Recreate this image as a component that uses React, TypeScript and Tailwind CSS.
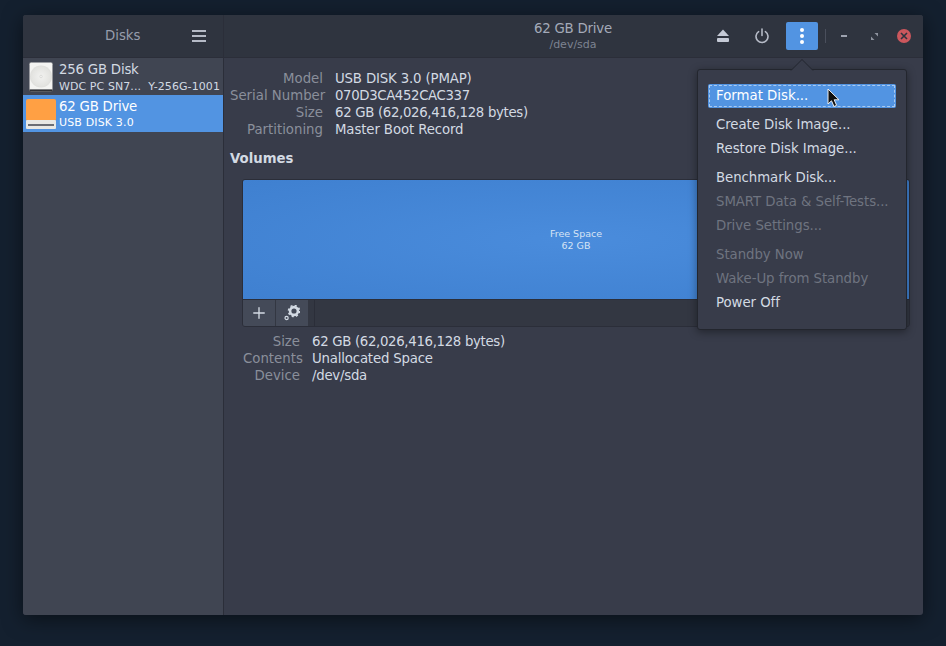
import { Plus } from 'lucide-react'

const font = { fontFamily: '"DejaVu Sans", sans-serif' }

function DiskIcon() {
  return (
    <svg width="24" height="30" viewBox="0 0 24 30" className="shrink-0">
      <defs>
        <radialGradient id="platter" cx="0.5" cy="0.5" r="0.6">
          <stop offset="0" stopColor="#f2f2f0" />
          <stop offset="0.7" stopColor="#e4e4e1" />
          <stop offset="1" stopColor="#d8d8d5" />
        </radialGradient>
      </defs>
      <rect x="0.3" y="0.3" width="23.4" height="29.4" rx="2" fill="#f4f4f2" stroke="#6b6e75" strokeWidth="0.6" />
      <rect x="0.5" y="27.4" width="23" height="2.2" fill="#2f3136" />
      <circle cx="12" cy="14.5" r="11" fill="url(#platter)" />
      <circle cx="12" cy="14.5" r="1.3" fill="#f2f2f0" stroke="#cbcbc8" strokeWidth="0.5" />
    </svg>
  )
}

function UsbIcon() {
  return (
    <svg width="30" height="30" viewBox="0 0 30 30" className="shrink-0">
      <rect x="0" y="0" width="30" height="22" rx="2" fill="#ffa044" />
      <rect x="0" y="21" width="30" height="9" rx="1" fill="#e8e8e4" />
      <rect x="2" y="25" width="26" height="2" fill="#6b6e75" />
    </svg>
  )
}

function Eject() {
  return (
    <svg width="14" height="14" viewBox="0 0 14 14">
      <path d="M7 .5 13 7H1Z" fill="#c5cad6" />
      <rect x="1" y="9" width="12" height="4" rx="1" fill="#c5cad6" />
    </svg>
  )
}

function Power() {
  return (
    <svg width="16" height="16" viewBox="0 0 16 16" fill="none" stroke="#b5bac6" strokeWidth="1.6" strokeLinecap="round">
      <path d="M4.6 3.6a6 6 0 1 0 6.8 0" />
      <path d="M8 1v6.5" />
    </svg>
  )
}

function Gears() {
  return (
    <svg width="16" height="16" viewBox="0 0 16 16" fill="none">
      <circle cx="10" cy="6" r="3.9" stroke="#d3dae3" strokeWidth="2.6" />
      <circle cx="10" cy="6" r="5.5" stroke="#d3dae3" strokeWidth="1.6" strokeDasharray="2.1 2.22" />
      <circle cx="2.6" cy="13" r="1.6" stroke="#d3dae3" strokeWidth="1.2" />
    </svg>
  )
}

function Row({ label, value, w, fix = '' }: { label: string; value: string; w: string; fix?: string }) {
  return (
    <div className="flex h-[17px] items-center whitespace-nowrap">
      <span className={`${w} shrink-0 text-right text-[#8a8f9b]`}>{label}</span>
      <span className={`ml-3 text-[#d3dae3] ${fix}`}>{value}</span>
    </div>
  )
}

function MenuItem({ label, off }: { label: string; off?: boolean }) {
  return (
    <div className={`flex h-6 items-center pl-[18px] tracking-[-0.05px] ${off ? 'text-[#6f7480]' : 'text-[#d3dae3]'}`}>{label}</div>
  )
}

export default function App() {
  return (
    <div style={font} className="relative flex h-[646px] w-[946px] items-start overflow-hidden bg-[#14202f] pl-[23px] pt-[15px] text-[13.3px] leading-none">
      <div className="flex h-[600px] w-[900px] flex-col overflow-hidden rounded-[3px] bg-[#383c4a] shadow-[0_4px_20px_rgba(0,0,0,0.5)]">
        <header className="flex h-[43px] shrink-0 border-b border-[#2b2e39] bg-[#2f343f]">
          <div className="flex w-[201px] shrink-0 items-center border-r border-[#2b2e39]">
            <span className="ml-[82px] text-[#979dac]">Disks</span>
            <div className="ml-[51px] flex w-[14px] flex-col gap-[3px]">
              <span className="h-[2px] bg-[#b5bac6]" />
              <span className="h-[2px] bg-[#b5bac6]" />
              <span className="h-[2px] bg-[#b5bac6]" />
            </div>
          </div>
          <div className="relative flex flex-1 items-center">
            <div className="ml-[272px] flex w-[154px] flex-col items-center">
              <span className="tracking-[-0.2px] text-[#a4aab8]">62 GB Drive</span>
              <span className="mt-[3px] text-[11px] text-[#7d8391]">/dev/sda</span>
            </div>
            <div className="ml-[66px] flex w-[14px] justify-center"><Eject /></div>
            <div className="ml-[24px] flex w-[16px] justify-center"><Power /></div>
            <div className="ml-[16px] flex h-[28px] w-[32px] flex-col items-center justify-center gap-[2px] rounded-[2px] bg-[#5294e2]">
              <span className="h-[4px] w-[4px] rounded-full bg-white" />
              <span className="h-[4px] w-[4px] rounded-full bg-white" />
              <span className="h-[4px] w-[4px] rounded-full bg-white" />
            </div>
            <span className="ml-[7px] h-[14px] w-px bg-[#4a4f5c]" />
            <span className="ml-[15px] h-[2px] w-[6px] bg-[#9ea3b0]" />
            <svg width="7" height="7" viewBox="0 0 8 8" className="ml-[24px]">
              <path d="M4 0H8V4ZM4 8H0V4Z" fill="#8d929e" />
            </svg>
            <span className="ml-[19px] flex h-[14px] w-[14px] items-center justify-center rounded-full bg-[#cc575d]">
              <svg width="8" height="8" viewBox="0 0 8 8" stroke="#2f343f" strokeWidth="1.6">
                <path d="M1 1 7 7M7 1 1 7" />
              </svg>
            </span>
          </div>
        </header>
        <div className="flex min-h-0 flex-1">
          <aside className="w-[201px] shrink-0 border-r border-[#2b2e39] bg-[#404552]">
            <div className="flex h-[37px] items-center pl-[6px] text-[#d3dae3]">
              <DiskIcon />
              <div className="ml-[6px] pt-[2px]">
                <div className="tracking-[-0.2px]">256 GB Disk</div>
                <div className="mt-[4px] whitespace-nowrap text-[11px] tracking-[0.08px]">WDC PC SN7...&nbsp; Y-256G-1001</div>
              </div>
            </div>
            <div className="flex h-[37px] items-center gap-[3px] bg-[#5294e2] pl-[3px] text-white">
              <UsbIcon />
              <div className="pt-[1px]">
                <div className="tracking-[-0.2px]">62 GB Drive</div>
                <div className="mt-[4px] text-[11px] tracking-[0.15px]">USB DISK 3.0</div>
              </div>
            </div>
          </aside>
          <main className="flex-1 pl-[6px] pr-[13px] pt-[12px]">
            <Row label="Model" value="USB DISK 3.0 (PMAP)" w="w-[93px]" fix="tracking-[-0.15px]" />
            <Row label="Serial Number" value="070D3CA452CAC337" w="w-[93px]" fix="tracking-[-0.37px]" />
            <Row label="Size" value="62 GB (62,026,416,128 bytes)" w="w-[93px]" fix="tracking-[-0.32px]" />
            <Row label="Partitioning" value="Master Boot Record" w="w-[93px]" fix="tracking-[-0.11px]" />
            <div className="mt-[14px] h-[17px] font-bold text-[#d3dae3]">Volumes</div>
            <div className="ml-[12px] mt-[10px] overflow-hidden rounded-[3px] border border-[#2b2e39]">
              <div className="flex h-[120px] items-center justify-center border-b border-[#2b2e39] bg-[radial-gradient(ellipse_at_center,#4a8cdc_0%,#3f80d0_100%)]">
                <div className="text-center text-[9.5px] leading-[12px] text-[#d7e4f5]">
                  Free Space<br />62 GB
                </div>
              </div>
              <div className="flex h-[26px] bg-[#333742]">
                <div className="flex w-[32px] items-center justify-center bg-[#444a58]">
                  <Plus size={18} strokeWidth={1.8} color="#d3dae3" />
                </div>
                <div className="ml-px flex w-[32px] items-center justify-center bg-[#444a58]">
                  <Gears />
                </div>
                <div className="ml-[6px] w-px bg-[#2b2e39]" />
              </div>
            </div>
            <div className="ml-[13px] mt-[6px]">
              <Row label="Size" value="62 GB (62,026,416,128 bytes)" w="w-[57px]" fix="tracking-[-0.32px]" />
              <Row label="Contents" value="Unallocated Space" w="w-[57px]" fix="tracking-[-0.18px]" />
              <Row label="Device" value="/dev/sda" w="w-[57px]" fix="tracking-[-0.25px]" />
            </div>
          </main>
        </div>
      </div>

      {/* popover menu */}
      <div className="absolute left-[697px] top-[69px] h-[261px] w-[210px] rounded-[3px] border border-[#23262e] bg-[#383c4a] pt-[14px] shadow-[0_2px_8px_rgba(0,0,0,0.4)]">
        <svg width="24" height="12" viewBox="0 0 24 12" className="absolute -top-[11px] left-[92px] block">
          <path d="M1 11.5 12 0.5 23 11.5" fill="#383c4a" stroke="#23262e" />
        </svg>
        <div className="mx-[10px] mb-[5px] flex h-[24px] items-center rounded-[2px] bg-[#5294e2] p-[1px]">
          <div className="flex h-full w-full items-center border border-dashed border-[#a9caf0] pl-[6px] text-white">Format Disk...</div>
        </div>
        <MenuItem label="Create Disk Image..." />
        <MenuItem label="Restore Disk Image..." />
        <div className="h-[5px]" />
        <MenuItem label="Benchmark Disk..." />
        <MenuItem label="SMART Data & Self-Tests..." off />
        <MenuItem label="Drive Settings..." off />
        <div className="h-[5px]" />
        <MenuItem label="Standby Now" off />
        <MenuItem label="Wake-Up from Standby" off />
        <MenuItem label="Power Off" />
        <svg width="13" height="20" viewBox="0 0 13 20" className="absolute left-[129px] top-[18px]">
          <path d="M1 1V16L4.5 12.8 7 18.5 9.6 17.3 7.2 11.8H12Z" fill="#111" stroke="#eee" strokeWidth="1" />
        </svg>
      </div>
    </div>
  )
}
